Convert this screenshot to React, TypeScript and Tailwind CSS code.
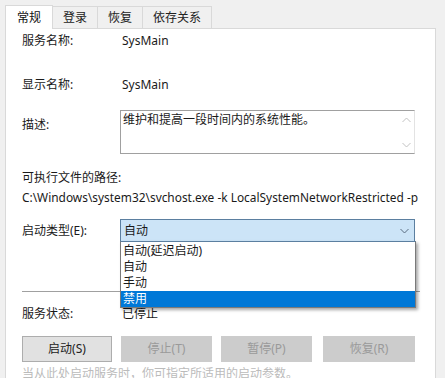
import React from "react";

const font = { fontFamily: '"Noto Sans", "Noto Sans CJK SC", sans-serif' };

const Tab = ({ label, active }: { label: string; active?: boolean }) => (
  <div
    className={
      active
        ? "relative z-10 h-[24px] -mb-[1px] bg-white border border-b-0 border-[#d9d9d9] px-[11px] flex items-center text-[12px] text-[#111]"
        : "h-[22px] mt-[2px] bg-[#f0f0f0] border border-l-0 border-b-0 border-[#d9d9d9] px-[10px] flex items-center text-[12px] text-[#222]"
    }
  >
    {label}
  </div>
);

const Chevron = ({ up, color }: { up?: boolean; color: string }) => (
  <svg width="9" height="6" viewBox="0 0 9 6">
    <path
      d={up ? "M0.5 5 L4.5 1 L8.5 5" : "M0.5 1 L4.5 5 L8.5 1"}
      fill="none"
      stroke={color}
      strokeWidth="1"
    />
  </svg>
);

const Btn = ({ label, enabled }: { label: string; enabled?: boolean }) => (
  <div
    className={
      enabled
        ? "h-[26px] w-[91px] bg-[#e1e1e1] border border-[#adadad] flex items-center justify-center text-[12px] text-[#222]"
        : "h-[26px] w-[92px] bg-[#cccccc] flex items-center justify-center text-[12px] text-[#9a9a9a]"
    }
  >
    {label}
  </div>
);

const App = () => {
  return (
    <div
      className="relative w-[445px] h-[378px] overflow-hidden bg-[#f0f0f0] text-[#1a1a1a]"
      style={font}
    >
      <div className="flex pl-[5px] pt-[3px] h-[28px] items-end">
        <Tab label="常规" active />
        <Tab label="登录" />
        <Tab label="恢复" />
        <Tab label="依存关系" />
      </div>

      <div className="ml-[5px] w-[431px] h-[360px] bg-white border border-[#d9d9d9] pl-[16px] pr-[20px] flex flex-col text-[12px] leading-[16px]">
        <div className="flex mt-[4px]">
          <div className="w-[100px]">服务名称:</div>
          <div>SysMain</div>
        </div>

        <div className="flex mt-[28px]">
          <div className="w-[100px]">显示名称:</div>
          <div>SysMain</div>
        </div>

        <div className="flex mt-[17px]">
          <div className="w-[98px] pt-[7px]">描述:</div>
          <div className="relative w-[295px] h-[44px] border border-[#a0a0a0] border-r-[#e3e3e3] pl-[2px] pt-[1px]">
            维护和提高一段时间内的系统性能。
            <div className="absolute right-[3px] top-[6px]">
              <Chevron up color="#c2c2c2" />
            </div>
            <div className="absolute right-[3px] bottom-[5px]">
              <Chevron color="#c2c2c2" />
            </div>
          </div>
        </div>

        <div className="mt-[16px]">可执行文件的路径:</div>
        <div className="mt-[3px] text-[11.9px] whitespace-nowrap">
          C:\Windows\system32\svchost.exe -k LocalSystemNetworkRestricted -p
        </div>

        <div className="flex mt-[14px] items-center">
          <div className="w-[98px]">启动类型(E):</div>
          <div className="w-[295px] h-[23px] bg-[#cce4f7] border border-[#5b7fa0] border-b-[#3b5a75] flex items-center justify-between pl-[3px] pr-[5px]">
            <span>自动</span>
            <Chevron color="#5a6d80" />
          </div>
        </div>

        <div className="mt-[49px] w-[398px] h-[1px] bg-[#a0a0a0]" />

        <div className="flex mt-[14px]">
          <div className="w-[100px]">服务状态:</div>
          <div>已停止</div>
        </div>

        <div className="flex mt-[14px] gap-[9px]">
          <Btn label="启动(S)" enabled />
          <Btn label="停止(T)" />
          <Btn label="暂停(P)" />
          <div className="ml-[2px]">
            <Btn label="恢复(R)" />
          </div>
        </div>

        <div className="mt-[4px] text-[#bbbbbb] whitespace-nowrap">
          当从此处启动服务时，你可指定所适用的启动参数。
        </div>
      </div>

      <div className="absolute left-[120px] top-[241px] w-[296px] bg-white border border-[#7a7a7a] border-t-[#5b7fa0] shadow-[2px_2px_3px_rgba(0,0,0,0.35)] text-[12px] leading-[16px] pt-[1px]">
        <div className="h-[16px] pl-[2px]">自动(延迟启动)</div>
        <div className="h-[16px] pl-[2px]">自动</div>
        <div className="h-[16px] pl-[2px]">手动</div>
        <div className="h-[16px] pl-[2px] bg-[#0078d7] text-white">禁用</div>
      </div>
    </div>
  );
};

export default App;
